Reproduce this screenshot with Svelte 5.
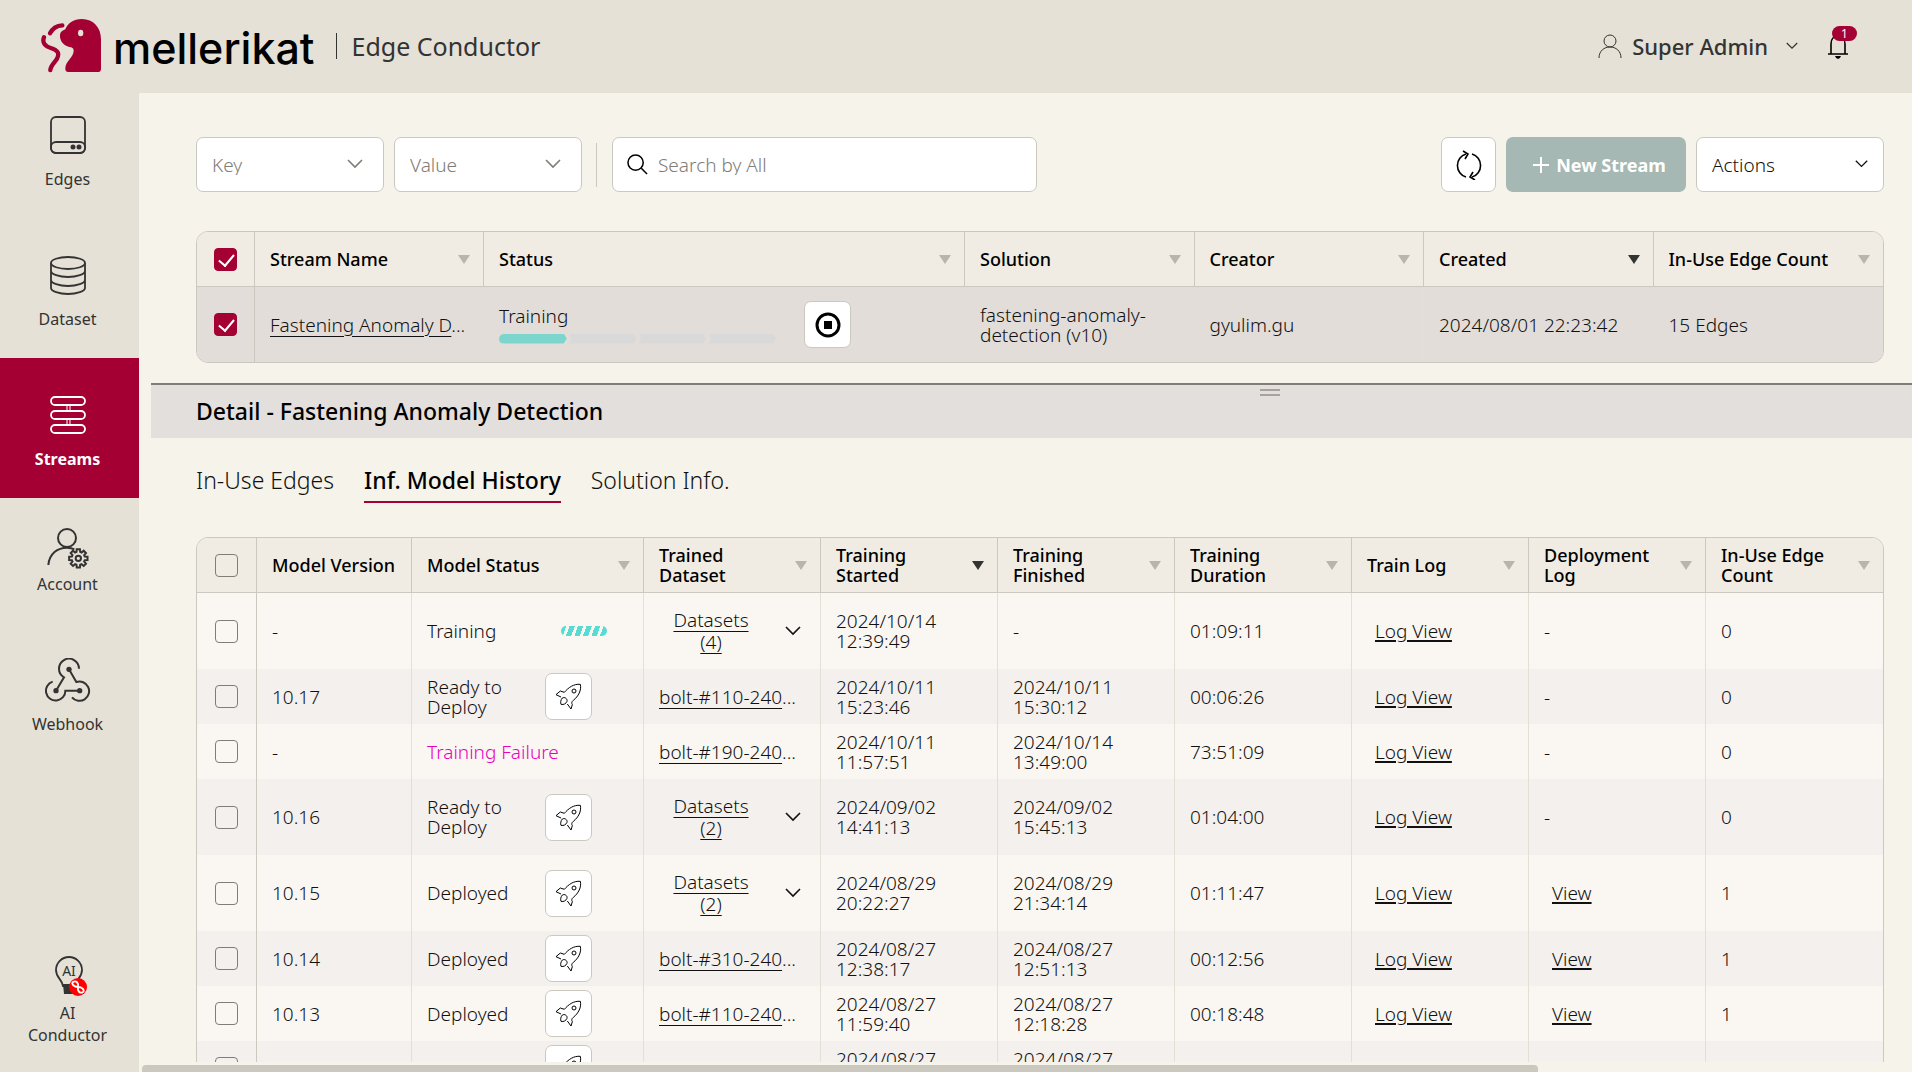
<script lang="ts">
/*******************************************************************************
*                                                                              *
*                        Edge Conductor - Streams page                         *
*                                                                              *
*******************************************************************************/

  type Dataset = { Name:string; Count?:number }

  type Model = {
    Version: string;
    Status:  'Training'|'Ready to Deploy'|'Training Failure'|'Deployed';
    Dataset: Dataset;
    Started: string;
    Finished:string;
    Duration:string;
    hasView: boolean;
    EdgeCount:number;
  }

  const StreamColumns = [
    { Label:'Stream Name',       Key:'name' },
    { Label:'Status',            Key:'status' },
    { Label:'Solution',          Key:'solution' },
    { Label:'Creator',           Key:'creator' },
    { Label:'Created',           Key:'created', active:true },
    { Label:'In-Use Edge Count', Key:'count' },
  ]

  const ModelColumns = [
    { Label:'Model Version',     Key:'version', fixed:true },
    { Label:'Model Status',      Key:'model-status' },
    { Label:'Trained Dataset',   Key:'dataset' },
    { Label:'Training Started',  Key:'started', active:true },
    { Label:'Training Finished', Key:'finished' },
    { Label:'Training Duration', Key:'duration' },
    { Label:'Train Log',         Key:'train-log' },
    { Label:'Deployment Log',    Key:'deploy-log' },
    { Label:'In-Use Edge Count', Key:'edges' },
  ]

  const Models:Model[] = [
    { Version:'-',     Status:'Training',         Dataset:{ Name:'Datasets', Count:4 },   Started:'2024/10/14 12:39:49', Finished:'-',                   Duration:'01:09:11', hasView:false, EdgeCount:0 },
    { Version:'10.17', Status:'Ready to Deploy',  Dataset:{ Name:'bolt-#110-240' },       Started:'2024/10/11 15:23:46', Finished:'2024/10/11 15:30:12', Duration:'00:06:26', hasView:false, EdgeCount:0 },
    { Version:'-',     Status:'Training Failure', Dataset:{ Name:'bolt-#190-240' },       Started:'2024/10/11 11:57:51', Finished:'2024/10/14 13:49:00', Duration:'73:51:09', hasView:false, EdgeCount:0 },
    { Version:'10.16', Status:'Ready to Deploy',  Dataset:{ Name:'Datasets', Count:2 },   Started:'2024/09/02 14:41:13', Finished:'2024/09/02 15:45:13', Duration:'01:04:00', hasView:false, EdgeCount:0 },
    { Version:'10.15', Status:'Deployed',         Dataset:{ Name:'Datasets', Count:2 },   Started:'2024/08/29 20:22:27', Finished:'2024/08/29 21:34:14', Duration:'01:11:47', hasView:true,  EdgeCount:1 },
    { Version:'10.14', Status:'Deployed',         Dataset:{ Name:'bolt-#310-240' },       Started:'2024/08/27 12:38:17', Finished:'2024/08/27 12:51:13', Duration:'00:12:56', hasView:true,  EdgeCount:1 },
    { Version:'10.13', Status:'Deployed',         Dataset:{ Name:'bolt-#110-240' },       Started:'2024/08/27 11:59:40', Finished:'2024/08/27 12:18:28', Duration:'00:18:48', hasView:true,  EdgeCount:1 },
    { Version:'10.12', Status:'Deployed',         Dataset:{ Name:'bolt-#190-240' },       Started:'2024/08/27 11:30:12', Finished:'2024/08/27 11:51:19', Duration:'00:21:07', hasView:true,  EdgeCount:1 },
  ]

  const Tabs = ['In-Use Edges', 'Inf. Model History', 'Solution Info.']

  let activeTab      = $state('Inf. Model History')
  let streamSelected = $state(true)
  let SearchText     = $state('')

/**** gearPath - outline of a cog wheel around (cx,cy) ****/

  function gearPath (cx:number, cy:number, Inner:number, Outer:number):string {
    const Points:string[] = []
    for (let i = 0; i < 8; i++) {
      const Corners:[number, number][] = [
        [-16, Inner], [-10, Outer], [10, Outer], [16, Inner],
      ]
      for (const [Offset, Radius] of Corners) {
        const Angle = (i*45 + Offset) * Math.PI/180
        Points.push(
          `${(cx + Radius*Math.cos(Angle)).toFixed(2)} ${(cy + Radius*Math.sin(Angle)).toFixed(2)}`
        )
      }
    }
    return `M${Points.join('L')}Z`
  }
</script>

{#snippet chevron()}
  <svg class="chevron" viewBox="0 0 16 10" aria-hidden="true"><path d="M1 1l7 7 7-7" /></svg>
{/snippet}

{#snippet rocket()}
  <svg class="rocket" viewBox="-2 -2 81 81" aria-hidden="true">
    <path d="M26 26C38 12 54 0 74 2C78 20 68 38 53 50C48 54 47 58 50 63L46 76L35 61" />
    <path d="M26 26L14 22L1 33L16 40" />
    <circle cx="55" cy="22" r="6" />
    <path d="M20 43C15 49 14 56 16 62C24 64 31 60 34 53C36 45 27 39 20 43Z" />
  </svg>
{/snippet}

{#snippet heading(Column:{ Label:string; active?:boolean; fixed?:boolean })}
  <div class="heading">
    <span>{Column.Label}</span>
    {#if !Column.fixed}
      <button class="sort" class:active={Column.active} aria-label="Sort by {Column.Label}"></button>
    {/if}
  </div>
{/snippet}

<div class="app">
  <header class="topbar">
    <svg class="mark" viewBox="30 24 186 165" aria-hidden="true">
      <path class="mark-body" d="M213 176Q213 186 203 186H115Q105 186 106 174C107 152 131 142 131 122C131 111 122 113 112 109C98 104 89 90 90 76C91 64 98 62 106 58C112 40 130 27 156 27C190 27 213 52 213 88Z" />
      <ellipse class="mark-eye" cx="152" cy="69" rx="8" ry="10" />
      <path class="mark-line" d="M97 46C80 47 68 54 60 70" />
      <path class="mark-line" d="M42 82C35 100 48 110 62 114C84 121 90 130 80 148C70 162 62 168 61 180" />
    </svg>
    <span class="brand">mellerikat</span>
    <span class="product">Edge Conductor</span>

    <button class="user">
      <svg class="person" viewBox="0 0 24 24" aria-hidden="true">
        <circle cx="12" cy="7" r="6" />
        <path d="M1 24C1 17 6 13 12 13S23 17 23 24" />
      </svg>
      <span>Super Admin</span>
      {@render chevron()}
    </button>
    <button class="bell" aria-label="Notifications">
      <svg viewBox="0 0 22 24" aria-hidden="true">
        <path d="M1 20H21M4 20V10C4 5 7 2 11 2S18 5 18 10V20" />
        <path class="clapper" d="M8 22H14Q13 25 11 25T8 22Z" />
      </svg>
      <span class="badge">1</span>
    </button>
  </header>

  <nav class="sidebar">
    <a class="item first" href="#edges">
      <svg width="38" height="40" viewBox="0 0 38 40" aria-hidden="true">
        <rect x="2" y="2" width="34" height="36" rx="5" />
        <rect x="2" y="27" width="34" height="11" rx="5" />
        <circle class="solid" cx="24" cy="32" r="2.5" />
        <circle class="solid" cx="30" cy="32" r="2.5" />
      </svg>
      Edges
    </a>
    <a class="item" href="#dataset">
      <svg width="38" height="40" viewBox="0 0 38 40" aria-hidden="true">
        <ellipse cx="19" cy="8" rx="17" ry="6" />
        <path d="M2 8V33C2 36 10 39 19 39S36 36 36 33V8M2 16C2 19 10 22 19 22S36 19 36 16M2 25C2 28 10 31 19 31S36 28 36 25" />
      </svg>
      Dataset
    </a>
    <a class="item current" href="#streams">
      <svg width="38" height="40" viewBox="0 0 38 40" aria-hidden="true">
        <rect x="2" y="2" width="34" height="8" rx="4" />
        <rect x="2" y="16" width="34" height="8" rx="4" />
        <rect x="2" y="30" width="34" height="8" rx="4" />
        <path class="fine" d="M18 10V16M21 10V16M18 24V30M21 24V30" />
      </svg>
      Streams
    </a>
    <a class="item raised" href="#account">
      <svg width="44" height="42" viewBox="76 80 130 126" aria-hidden="true">
        <circle class="wide" cx="138" cy="113" r="27" />
        <path class="wide" d="M82 194C85 160 110 142 138 142C148 142 155 144 160 147" />
        <path class="wide" d={gearPath(172, 174, 20, 28)} />
        <circle class="wide" cx="172" cy="174" r="8" />
      </svg>
      Account
    </a>
    <a class="item raised webhook" href="#webhook">
      <svg width="46" height="44" viewBox="74 472 138 132" aria-hidden="true">
        <path class="wide" d="M176 504A30 30 0 1 0 131 530L107 570" />
        <path class="wide" d="M146 506L168 544A29 29 0 1 1 155 590" />
        <path class="wide" d="M178 570H135A29 29 0 1 1 97 543" />
        <circle class="solid" cx="146" cy="506" r="8" />
        <circle class="solid" cx="107" cy="570" r="8" />
        <circle class="solid" cx="178" cy="570" r="8" />
      </svg>
      Webhook
    </a>
    <a class="item bottom" href="#ai">
      <svg width="38" height="42" viewBox="-2 0 38 42" aria-hidden="true">
        <path d="M12 30C11 23 5 22 5 14A13 13 0 0 1 31 14C31 22 25 23 24 30Z" />
        <path class="solid" d="M12 28H24L23 38H13Z" />
        <text x="18" y="20">AI</text>
        <circle class="red" cx="27" cy="31" r="9" />
        <path class="loop" d="M27 31C23 31 20 28 22 26C25 24 28 27 27 31S29 38 32 36C34 34 31 31 27 31Z" />
      </svg>
      <span>AI<br />Conductor</span>
    </a>
  </nav>

  <main class="content">
    <div class="toolbar">
      <div class="select">
        <select aria-label="Key"><option>Key</option></select>
        {@render chevron()}
      </div>
      <div class="select">
        <select aria-label="Value"><option>Value</option></select>
        {@render chevron()}
      </div>
      <label class="search">
        <svg viewBox="0 0 22 22" aria-hidden="true">
          <circle cx="9" cy="9" r="8" /><path d="M15 15L21 21" />
        </svg>
        <input type="text" placeholder="Search by All" aria-label="Search by All" bind:value={SearchText} />
      </label>
      <button class="refresh" aria-label="Refresh">
        <svg viewBox="0 0 26 30" aria-hidden="true">
          <path d="M10 27A12 12 0 0 1 10 4M16 4A12 12 0 0 1 16 27" />
          <path d="M7 1L12 4L9 9M19 30L14 27L17 22" />
        </svg>
      </button>
      <button class="new-stream">
        <svg viewBox="0 0 16 16" aria-hidden="true"><path d="M8 0V16M0 8H16" /></svg>
        New Stream
      </button>
      <div class="select actions">
        <select aria-label="Actions"><option>Actions</option></select>
        {@render chevron()}
      </div>
    </div>

    <div class="frame streams">
      <table>
        <colgroup>
          <col class="c-check" /><col class="c-name" /><col class="c-status" />
          <col /><col /><col /><col />
        </colgroup>
        <thead>
          <tr>
            <th class="check"><input type="checkbox" aria-label="Select all streams" bind:checked={streamSelected} /></th>
            {#each StreamColumns as Column (Column.Key)}
              <th>{@render heading(Column)}</th>
            {/each}
          </tr>
        </thead>
        <tbody>
          <tr class:selected={streamSelected}>
            <td class="check"><input type="checkbox" aria-label="Select stream" bind:checked={streamSelected} /></td>
            <td class="nowrap"><a class="thin" href="#stream">Fastening Anomaly D</a>...</td>
            <td>
              <div class="status">
                <div class="progress">
                  <span>Training</span>
                  <div class="steps"><i class="done"></i><i></i><i></i><i></i></div>
                </div>
                <button class="icon-button" aria-label="Stop training">
                  <svg class="stop" viewBox="0 0 26 26" aria-hidden="true">
                    <circle cx="13" cy="13" r="11" /><rect x="9" y="9" width="8" height="8" />
                  </svg>
                </button>
              </div>
            </td>
            <td>fastening-anomaly-detection (v10)</td>
            <td>gyulim.gu</td>
            <td>2024/08/01 22:23:42</td>
            <td>15 Edges</td>
          </tr>
        </tbody>
      </table>
    </div>

    <section class="detail">
      <div class="detail-bar">
        <h2>Detail - Fastening Anomaly Detection</h2>
        <span class="handle"></span>
      </div>

      <div class="tabs" role="tablist">
        {#each Tabs as Tab (Tab)}
          <button
            role="tab"
            class="tab"
            class:active={Tab === activeTab}
            aria-selected={Tab === activeTab}
            onclick={() => activeTab = Tab}
          >{Tab}</button>
        {/each}
      </div>

      <div class="frame models">
        <table>
          <colgroup>
            <col class="m-check" /><col class="m-version" /><col class="m-status" />
            <col /><col /><col /><col /><col /><col /><col />
          </colgroup>
          <thead>
            <tr>
              <th class="check"><input type="checkbox" aria-label="Select all models" /></th>
              {#each ModelColumns as Column (Column.Key)}
                <th>{@render heading(Column)}</th>
              {/each}
            </tr>
          </thead>
          <tbody>
            {#each Models as Model, Index (Index)}
              <tr class:tall={Model.Dataset.Count != null}>
                <td class="check"><input type="checkbox" aria-label="Select model {Model.Version}" /></td>
                <td>{Model.Version}</td>
                <td>
                  {#if Model.Status === 'Training Failure'}
                    <span class="failure">{Model.Status}</span>
                  {:else}
                    <div class="model-status">
                      <span>{Model.Status}</span>
                      {#if Model.Status === 'Training'}
                        <i class="stripes"></i>
                      {:else}
                        <button class="icon-button" aria-label="Deploy">{@render rocket()}</button>
                      {/if}
                    </div>
                  {/if}
                </td>
                <td>
                  {#if Model.Dataset.Count != null}
                    <div class="dataset">
                      <a class="thin" href="#datasets">{Model.Dataset.Name} ({Model.Dataset.Count})</a>
                      {@render chevron()}
                    </div>
                  {:else}
                    <span class="nowrap"><a class="thin" href="#dataset">{Model.Dataset.Name}</a>...</span>
                  {/if}
                </td>
                <td>{Model.Started}</td>
                <td>{Model.Finished}</td>
                <td>{Model.Duration}</td>
                <td><a class="log" href="#log">Log View</a></td>
                <td>
                  {#if Model.hasView}<a class="log" href="#view">View</a>{:else}-{/if}
                </td>
                <td>{Model.EdgeCount}</td>
              </tr>
            {/each}
          </tbody>
        </table>
      </div>
    </section>

    <div class="scrollbar"><i></i></div>
  </main>
</div>

<style>
  :global(body) { background: #f6f3ea; }

  .app {
    --red: #a50034;
    --line: #cbc8c0;
    --soft-line: #e3dfd5;
    --ink: #111;
    display: grid;
    grid-template: 93px minmax(0, 1fr) / 139px minmax(0, 1fr);
    height: 100vh;
    overflow: hidden;
    background: #f6f3ea;
    color: var(--ink);
    font: 300 19px/20px 'Noto Sans', 'Open Sans', sans-serif;
  }
  .app * { box-sizing: border-box; }
  button, input, select { font: inherit; color: inherit; }
  button { padding: 0; border: 0; background: none; cursor: pointer; }
  svg { fill: none; stroke: currentColor; flex-shrink: 0; }
  a { color: inherit; }

  .chevron { width: 16px; height: 10px; stroke-width: 1.6; }

/**** top bar ****/

  .topbar {
    grid-column: 1 / 3;
    display: flex;
    align-items: center;
    padding: 0 63px 2px 40px;
    background: #e5e1d6;
    color: #333;
  }
  .mark      { width: 62px; height: 55px; margin-right: 11px; stroke: none; }
  .mark-body { fill: var(--red); }
  .mark-eye  { fill: #e5e1d6; }
  .mark-line { stroke: var(--red); stroke-width: 13; stroke-linecap: round; }
  .brand {
    margin-top: 5px;
    font: 500 43px/48px Inter, 'Liberation Sans', sans-serif;
    color: #000;
  }
  .product {
    margin-left: 22px;
    padding-left: 14px;
    border-left: 1px solid #333;
    font-size: 25px;
    font-weight: 400;
    line-height: 26px;
  }
  .user {
    display: flex;
    align-items: center;
    margin-left: auto;
    font-size: 22px;
    font-weight: 500;
    line-height: 26px;
  }
  .person { width: 24px; height: 24px; margin-right: 10px; }
  .user .chevron { width: 12px; height: 8px; margin-left: 18px; }
  .bell { position: relative; margin-left: 29px; color: #000; }
  .bell svg { display: block; width: 22px; height: 24px; stroke-width: 1.6; overflow: visible; }
  .clapper { fill: #000; stroke: none; }
  .badge {
    position: absolute;
    top: -8px; left: 5px;
    width: 25px;
    border-radius: 8px;
    background: var(--red);
    color: #fff;
    font-size: 12px;
    font-weight: 400;
    line-height: 15px;
  }

/**** sidebar ****/

  .sidebar {
    display: flex;
    flex-direction: column;
    padding-bottom: 26px;
    background: #e5e1d6;
  }
  .item {
    display: flex;
    flex-direction: column;
    align-items: center;
    justify-content: flex-end;
    gap: 13px;
    height: 140px;
    padding: 0 4px 28px 0;
    color: #333;
    font-size: 16px;
    font-weight: 400;
    line-height: 22px;
    text-align: center;
    text-decoration: none;
  }
  .item svg     { stroke-width: 1.8; }
  .item.first   { height: 125px; }
  .item.current { background: var(--red); color: #fff; font-weight: 700; }
  .item.raised  { padding-bottom: 43px; gap: 4px; }
  .item.webhook { gap: 11px; }
  .item.bottom  { height: auto; margin-top: auto; padding-bottom: 0; gap: 4px; }
  .fine  { stroke-width: 1; }
  .wide  { stroke-width: 6; }
  .solid { fill: currentColor; stroke: none; }
  .red   { fill: #f00; stroke: none; }
  .loop  { stroke: #fff; }
  .item text { fill: #333; stroke: none; font-size: 14px; text-anchor: middle; }

/**** tool bar ****/

  .content { display: flex; flex-direction: column; min-height: 0; }
  .toolbar {
    display: flex;
    align-items: center;
    gap: 10px;
    padding: 44px 28px 39px 57px;
  }
  .select {
    position: relative;
    width: 188px;
    color: #807d77;
  }
  .select select {
    width: 100%;
    height: 55px;
    padding: 0 15px;
    border: 1px solid var(--line);
    border-radius: 7px;
    background: #fff;
    appearance: none;
  }
  .select .chevron {
    position: absolute;
    top: 22px; right: 21px;
    pointer-events: none;
  }
  .actions { color: var(--ink); }
  .actions .chevron { width: 13px; right: 16px; }
  .search {
    position: relative;
    display: flex;
    align-items: center;
    gap: 10px;
    width: 425px;
    height: 55px;
    margin-left: 20px;
    padding: 0 14px;
    border: 1px solid var(--line);
    border-radius: 7px;
    background: #fff;
  }
  .search::before {
    content: '';
    position: absolute;
    top: 5px; left: -17px;
    height: 44px;
    border-left: 1px solid var(--line);
  }
  .search svg   { width: 21px; height: 21px; stroke-width: 1.6; color: #000; }
  .search input { flex: 1; min-width: 0; padding: 0; border: 0; outline: 0; background: none; }
  .search input::placeholder { color: #807d77; opacity: 1; }
  .refresh {
    display: grid;
    place-items: center;
    width: 55px; height: 55px;
    margin-left: auto;
    border: 1px solid var(--line);
    border-radius: 7px;
    background: #fff;
    color: #000;
  }
  .refresh svg { width: 26px; height: 30px; stroke-width: 1.6; }
  .new-stream {
    display: flex;
    align-items: center;
    justify-content: center;
    gap: 7px;
    width: 180px; height: 55px;
    padding-left: 7px;
    border-radius: 7px;
    background: #a6b8b4;
    color: #fff;
    font-size: 18px;
    font-weight: 700;
    white-space: nowrap;
  }
  .new-stream svg { width: 16px; height: 16px; stroke-width: 2; }

/**** tables ****/

  .frame {
    margin: 0 28px 0 57px;
    border: 1px solid var(--line);
    border-radius: 12px;
    overflow: hidden;
    flex-shrink: 0;
  }
  table {
    width: 100%;
    table-layout: fixed;
    border-spacing: 0;
  }
  .c-check   { width: 58px; }
  .c-name    { width: 229px; }
  .c-status  { width: 481px; }
  .m-check   { width: 60px; }
  .m-version { width: 155px; }
  .m-status  { width: 232px; }

  th, td { padding: 0 15px; text-align: left; vertical-align: middle; }
  th {
    height: 55px;
    border-right: 1px solid var(--line);
    border-bottom: 1px solid var(--line);
    background: #f0ece4;
    color: #000;
    font-size: 18px;
    font-weight: 500;
  }
  td { height: 55px; border-right: 1px solid var(--soft-line); }
  .tall td { height: 76px; }
  .streams td { height: 75px; }
  th:last-child, td:last-child { border-right: 0; }
  .check { padding: 0; border-right: 1px solid var(--line); text-align: center; }
  tbody tr { background: #faf7f2; }
  tbody tr:nth-child(even) { background: #f4f0ed; }
  tbody tr.selected { background: #e2ddd9; }

  .heading {
    display: flex;
    align-items: center;
    justify-content: space-between;
    gap: 12px;
  }
  .sort {
    flex-shrink: 0;
    margin-right: -2px;
    border: 6px solid transparent;
    border-top: 9px solid #b8b5ac;
    border-bottom: 0;
  }
  .sort.active { border-top-color: #333; }

  input[type='checkbox'] {
    display: block;
    width: 23px; height: 23px;
    margin: 0 auto;
    border: 1px solid #807d77;
    border-radius: 4px;
    appearance: none;
  }
  input[type='checkbox']:checked { border-color: var(--red); background: var(--red); }
  input[type='checkbox']:checked::before {
    content: '';
    display: block;
    width: 7px; height: 13px;
    margin: 2px 0 0 7px;
    border: solid #fff;
    border-width: 0 2px 2px 0;
    transform: rotate(40deg);
  }

  .thin {
    text-decoration-thickness: 1px;
    text-underline-offset: 4px;
  }
  .log {
    margin-left: 8px;
    text-decoration-thickness: 2px;
    text-underline-offset: 2px;
  }
  .nowrap  { white-space: nowrap; }
  .failure { color: #e800c0; }

  .status { display: flex; align-items: center; gap: 28px; }
  .progress { width: 277px; }
  .steps { display: flex; gap: 2px; margin-top: 8px; }
  .steps i {
    flex: 1;
    height: 10px;
    background: #d9d9d9;
    clip-path: polygon(0 0, calc(100% - 3px) 0, 100% 50%, calc(100% - 3px) 100%, 0 100%, 3px 50%);
  }
  .steps .done {
    border-radius: 5px 0 0 5px;
    background: #7dd6cd;
    clip-path: polygon(0 0, calc(100% - 3px) 0, 100% 50%, calc(100% - 3px) 100%, 0 100%);
  }

  .icon-button {
    display: grid;
    place-items: center;
    flex-shrink: 0;
    width: 47px; height: 47px;
    border: 1px solid var(--line);
    border-radius: 7px;
    background: #fff;
    color: #000;
  }
  .stop      { width: 26px; height: 26px; stroke-width: 3; }
  .stop rect { fill: #000; stroke: none; }
  .rocket    { width: 27px; height: 27px; stroke-width: 3; stroke-linejoin: round; }

  .model-status {
    display: flex;
    align-items: center;
    justify-content: space-between;
    padding-right: 36px;
  }
  .model-status span { max-width: 90px; }
  .stripes {
    width: 46px; height: 10px;
    margin-right: -15px;
    border-radius: 5px;
    background: repeating-linear-gradient(110deg, #58dbd0 0 5px, #faf7f2 5px 8px);
  }
  .dataset {
    display: flex;
    align-items: center;
    justify-content: space-between;
    padding-right: 4px;
    line-height: 22px;
  }
  .dataset a { width: 104px; padding: 0 10px; text-align: center; }

/**** detail pane ****/

  .detail {
    flex: 1;
    display: flex;
    flex-direction: column;
    min-height: 0;
    margin-top: 20px;
    overflow: hidden;
  }
  .detail-bar {
    position: relative;
    flex-shrink: 0;
    margin-left: 12px;
    padding: 12px 45px 13px;
    border-top: 2px solid #807d77;
    background: #e3dfdc;
  }
  h2 {
    margin: 0;
    color: #000;
    font-size: 23px;
    font-weight: 500;
    line-height: 28px;
  }
  .handle {
    position: absolute;
    top: 4px; left: 63%;
    width: 20px; height: 7px;
    border: solid #a7a29e;
    border-width: 2px 0;
  }
  .tabs { display: flex; gap: 30px; padding: 23px 57px 34px; }
  .tab {
    padding: 3px 0 5px;
    border-bottom: 2px solid transparent;
    font-size: 23px;
    line-height: 32px;
  }
  .tab.active { border-color: var(--red); color: #000; font-weight: 500; }

  .scrollbar {
    flex-shrink: 0;
    height: 10px;
    padding: 3px 3px 0;
  }
  .scrollbar i {
    display: block;
    width: 79%;
    height: 7px;
    border-radius: 4px 4px 0 0;
    background: var(--line);
  }
</style>
